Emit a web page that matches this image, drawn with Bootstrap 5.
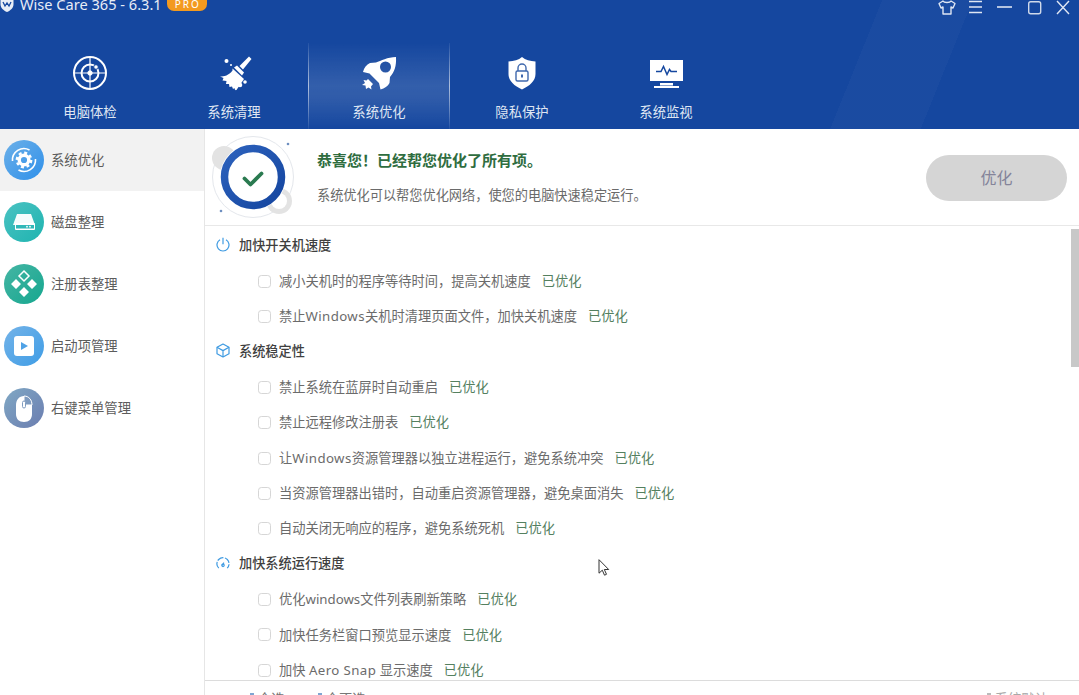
<!DOCTYPE html>
<html lang="zh-CN">
<head>
  <meta charset="UTF-8">
  <title>Wise Care 365</title>
  <link href="https://cdn.jsdelivr.net/npm/bootstrap@5.3.0/dist/css/bootstrap.min.css" rel="stylesheet">
  <style>
    html, body { height: 100%; overflow: hidden; }
    body { font-family: "Noto Sans CJK SC", "Noto Sans", sans-serif; font-size: 13.33px; color: #666; background: #fff; }
    .app-shell { height: 695px; position: relative; overflow: hidden; }
    .app-head { height: 129px; flex: none; background: #15479f linear-gradient(112deg, transparent 78%, rgba(255,255,255,.022) 78%, rgba(255,255,255,.022) 86%, transparent 86%); color: #fff; }
    .title-row { height: 24px; margin-top: -8px; padding-left: 0; }
    .app-name { font-family: "Noto Sans", sans-serif; font-size: 14.6px; color: #e8edf6; margin-left: 6px; line-height: 24px; }
    .pro-tag { background: #f39a1f; color: #fff; font-family: "Noto Sans", sans-serif; font-size: 10px; letter-spacing: 2px; line-height: 14px; height: 14px; padding: 0 6px 0 8px; border-radius: 0 0 7px 7px; margin: 0 0 5px 5px; align-self: flex-end; }
    .win-btns { padding-right: 8px; }
    .win-btns svg { display: block; }
    .win-gap { margin-right: 9px; }
    .tab-strip { margin-top: 27px; padding-left: 18px; height: 86px; flex-wrap: nowrap; }
    .tab-link { width: 144px; height: 86px; padding: 10px 0 0; color: #dfe6f3; text-align: center; line-height: 1; }
    .tab-link:hover, .tab-link:focus { color: #dfe6f3; }
    .tab-link svg { display: block; margin: 0 auto; }
    .tab-link span { display: block; margin-top: 12px; }
    .tab-link.tab-on { background: linear-gradient(180deg, rgba(255,255,255,0) 0%, rgba(255,255,255,.13) 50%, rgba(255,255,255,.11) 65%, rgba(255,255,255,0) 100%); border-style: solid; border-width: 0 1px; border-image: linear-gradient(180deg, rgba(255,255,255,.05), rgba(255,255,255,.6) 50%, rgba(255,255,255,.05)) 1; width: 142px; margin-left: 2px; color: #dfe6f3; }
    .side-col { width: 205px; flex: none; border-right: 1px solid #e6e6e6; }
    .side-item { height: 62px; border: 0; padding: 0 0 0 4px; gap: 7px; color: #5c5c5c; background: transparent; }
    .side-item.side-on { background: #f2f2f2; color: #5c5c5c; }
    .hero { height: 97px; flex: none; border-bottom: 1px solid #e8e8e8; padding: 0 12px 0 3px; }
    .hero-title { color: #2f6d3f; font-size: 15px; font-weight: 700; line-height: 20px; }
    .hero-sub { margin-top: 15px; line-height: 20px; font-size: 13.2px; color: #6a6a6a; }
    .hero-text { margin-left: 19px; margin-top: 1px; }
    .opt-btn { width: 141px; height: 46px; padding: 0 0 2px; background: #d5d5d5; border: 0; color: #84849a; font-size: 16px; margin-top: 1px; }
    .opt-btn:disabled { background: #d5d5d5; color: #84849a; opacity: 1; }
    .list-wrap { min-height: 0; overflow: hidden; }
    .opt-list { padding-top: 2px; }
    .sec-row { height: 35.4px; padding: 0 0 2px 11px; gap: 9px; color: #3f3f3f; font-size: 13.2px; font-weight: 500; }
    .opt-row { height: 35.4px; padding: 1px 0 0 53px; gap: 8px; color: #6b6b6b; font-family: "Noto Sans", "Noto Sans CJK SC", sans-serif; font-size: 13.26px; }
    .opt-row input { width: 13px; height: 13px; margin: -1px 0 0; border: 1px solid #d6d6d6; border-radius: 1px; background-color: #fff; flex: none; }
    .opt-row input:disabled { opacity: 1; }
    .latin-wide { letter-spacing: .4px; }
    .done-tag { color: #54805f; margin-left: 3px; }
    .scroll-track { width: 8px; flex: none; padding-top: 3px; }
    .scroll-thumb { height: 138px; background: #c8c8c8; }
    .foot-bar { height: 15px; flex: none; border-top: 1px solid #dcdcdc; padding: 10px 31px 0 45px; overflow: hidden; color: #777; line-height: 16px; align-items: flex-start; }
    .foot-link { display: flex; gap: 4px; align-items: flex-start; color: #777; }
    .foot-wide { margin-left: 33px; }
    .foot-dot { display: block; width: 4px; height: 2px; margin-top: 2px; background: #7fa5d2; }
    .foot-link.foot-right { color: #aaa; }
    .foot-link.foot-right .foot-dot { background: #bbb; }
    .arrow-cursor { position: absolute; left: 598px; top: 559px; }
  </style>
</head>
<body>
<div class="app-shell d-flex flex-column">

  <header class="app-head">
    <div class="title-row d-flex align-items-center">
      <svg width="14" height="16" viewBox="0 0 14 16"><path d="M7 0l6.500 2v6c0 4-3 6.500-6.500 8C3.500 14.500.5 12 .5 8V2z" fill="#e8edf6"/><path d="M3 6l2 4 2-3 2 3 2-4" fill="none" stroke="#15479f" stroke-width="1.300"/></svg>
      <span class="app-name">Wise Care 365 - 6.3.1</span>
      <span class="pro-tag">PRO</span>
      <div class="win-btns d-flex ms-auto">
        <svg width="22" height="24" viewBox="0 0 22 24" class="win-gap"><path d="M7 9l-4 2.500 2 4.500 2-1v7h8v-7l2 1 2-4.500L15 9c-1 2-7 2-8 0z" fill="none" stroke="#dfe6f3" stroke-width="1.400" stroke-linejoin="round"/></svg>
        <svg width="18" height="24" viewBox="0 0 18 24" class="win-gap"><path d="M2 9.500h13M2 15h13M2 20.500h13" stroke="#dfe6f3" stroke-width="1.400"/></svg>
        <svg width="22" height="24" viewBox="0 0 22 24" class="win-gap"><path d="M3 15h15" stroke="#e8edf6" stroke-width="1.500"/></svg>
        <svg width="22" height="24" viewBox="0 0 22 24" class="me-2"><rect x="3.700" y="9.700" width="12" height="12" rx="2" fill="none" stroke="#cfd9ea" stroke-width="1.400"/></svg>
        <svg width="16" height="24" viewBox="0 0 16 24"><path d="M2 9l12 13M14 9L2 22" stroke="#dfe6f3" stroke-width="1.400"/></svg>
      </div>
    </div>

    <ul class="nav tab-strip">
      <li class="nav-item"><a class="nav-link tab-link" href="#">
        <svg width="40" height="40" viewBox="0 0 40 40" fill="none" stroke="#fff"><circle cx="20" cy="20" r="16" stroke-width="2"/><circle cx="20" cy="20" r="8.500" stroke-width="2"/><path d="M20 4v32M4 20h32" stroke-width="1.200"/><circle cx="20" cy="20" r="2.200" fill="#fff"/><circle cx="26" cy="14" r="2.300" fill="#fff" stroke="#15479f"/></svg>
        <span>电脑体检</span></a></li>
      <li class="nav-item"><a class="nav-link tab-link" href="#">
        <svg width="40" height="40" viewBox="0 0 40 40" fill="#fff"><path d="M35 3.500l2.500 2.500-8.500 10.500-3.500-3.500z"/><path d="M20 14.500l3-2 7 7-2 3z"/><path d="M18.500 15.500L30 26c-2 3-4 6-7.500 11-1 .5-2-.5-2-2l-1.500 1-1-2.500-2.500.5-.5-3-3 0 .5-3-4-.5 1-2.500-3.500-1.500c4 0 9-1 12.500-6z"/><circle cx="12.500" cy="8" r="2"/><circle cx="31" cy="29" r="1.800"/><circle cx="26" cy="32" r="2.300"/><circle cx="17" cy="12" r="1"/></svg>
        <span>系统清理</span></a></li>
      <li class="nav-item"><a class="nav-link tab-link tab-on" href="#">
        <svg width="40" height="40" viewBox="0 0 40 40"><path fill="#fff" fill-rule="evenodd" d="M37 4c.5 9-1.500 15-6 20l-.5 6c-1.500 3-5 5.500-9 6.500l-1.500-6.500-9.500-9.500-6.500-1.500c1-4 3.500-7.500 7-9l6-.5C22 8 28.500 4 37 4zM26.500 8.500a5.500 5.500 0 1 0 0 11 5.500 5.500 0 0 0 0-11z"/><path fill="#fff" d="M9 26l5 5-2 2.500.5 3-3-2-2.500 1.500-.5-3.500-3.500-.5L6 30l-1.500-3 3 .5z"/></svg>
        <span>系统优化</span></a></li>
      <li class="nav-item"><a class="nav-link tab-link" href="#">
        <svg width="40" height="40" viewBox="0 0 40 40"><path fill="#fff" d="M20 4c3.500 3 8 4 13.500 4.500V21c0 7-6 12-13.500 15.500C12.500 33 6.500 28 6.500 21V8.500C12 8 16.500 7 20 4z"/><rect x="14" y="18" width="12" height="10" rx="1.500" fill="none" stroke="#3f68ad" stroke-width="1.400"/><path d="M16 18v-3a4 4 0 0 1 8 0v3" fill="none" stroke="#3f68ad" stroke-width="1.400"/><path d="M20 21.500v3" stroke="#3f68ad" stroke-width="2"/></svg>
        <span>隐私保护</span></a></li>
      <li class="nav-item"><a class="nav-link tab-link" href="#">
        <svg width="40" height="40" viewBox="0 0 40 40"><rect x="4" y="7" width="33" height="21" fill="#fff"/><path d="M14 30h13v2.500H14z" fill="#fff"/><path d="M8 33h25v2H8z" fill="#fff"/><path d="M10 18.500h5l2.500-5 3.500 8 2.500-5 1.500 2h6" fill="none" stroke="#15479f" stroke-width="1.500"/></svg>
        <span>系统监视</span></a></li>
    </ul>
  </header>

  <div class="d-flex flex-grow-1" style="min-height:0">
    <aside class="side-col">
      <div class="list-group list-group-flush">
        <a href="#" class="list-group-item side-item side-on d-flex align-items-center">
          <svg width="40" height="40" viewBox="0 0 40 40"><defs><linearGradient id="g1" x1="0" y1="0" x2="1" y2="1"><stop offset="0" stop-color="#6cb0e8"/><stop offset="1" stop-color="#2f90ea"/></linearGradient></defs><circle cx="20" cy="20" r="20" fill="url(#g1)"/><path d="M8.500 21a11.500 11.500 0 0 1 17-11M31.500 19a11.500 11.500 0 0 1-17 11" fill="none" stroke="#fff" stroke-width="1.600"/><circle cx="20" cy="20" r="4.800" fill="none" stroke="#fff" stroke-width="3.400"/><circle cx="20" cy="20" r="7.200" fill="none" stroke="#fff" stroke-width="2.400" stroke-dasharray="3 2.650"/></svg>
          <span>系统优化</span></a>
        <a href="#" class="list-group-item side-item d-flex align-items-center">
          <svg width="40" height="40" viewBox="0 0 40 40"><defs><linearGradient id="g2" x1="0" y1="0" x2="1" y2="1"><stop offset="0" stop-color="#4ac2c2"/><stop offset="1" stop-color="#1fb4b0"/></linearGradient></defs><circle cx="20" cy="20" r="20" fill="url(#g2)"/><path d="M13 12h14l4 11H9z" fill="#fff" opacity=".95"/><rect x="11" y="21" width="20" height="7" rx="1" fill="#fff"/><rect x="12" y="23" width="18" height="3.500" fill="#2fb8b8"/><circle cx="23" cy="24.700" r=".9" fill="#fff"/><circle cx="26" cy="24.700" r=".9" fill="#fff"/></svg>
          <span>磁盘整理</span></a>
        <a href="#" class="list-group-item side-item d-flex align-items-center">
          <svg width="40" height="40" viewBox="0 0 40 40"><defs><linearGradient id="g3" x1="0" y1="0" x2="1" y2="1"><stop offset="0" stop-color="#45b5a4"/><stop offset="1" stop-color="#16a78f"/></linearGradient></defs><circle cx="20" cy="20" r="20" fill="url(#g3)"/><path d="M20 7l5 5-5 5-5-5z" fill="none" stroke="#fff" stroke-width="1.500"/><path d="M12 15l5 5-5 5-5-5zM28 15l5 5-5 5-5-5zM20 23l5 5-5 5-5-5z" fill="#fff"/></svg>
          <span>注册表整理</span></a>
        <a href="#" class="list-group-item side-item d-flex align-items-center">
          <svg width="40" height="40" viewBox="0 0 40 40"><defs><linearGradient id="g4" x1="0" y1="0" x2="1" y2="1"><stop offset="0" stop-color="#74b3e8"/><stop offset="1" stop-color="#3f9de6"/></linearGradient></defs><circle cx="20" cy="20" r="20" fill="url(#g4)"/><rect x="10" y="10" width="20" height="20" rx="3" fill="#fff"/><path d="M17 16l7 4-7 4z" fill="#4fa2e6"/></svg>
          <span>启动项管理</span></a>
        <a href="#" class="list-group-item side-item d-flex align-items-center">
          <svg width="40" height="40" viewBox="0 0 40 40"><defs><linearGradient id="g5" x1="0" y1="0" x2="1" y2="1"><stop offset="0" stop-color="#80a8c4"/><stop offset="1" stop-color="#6b7db0"/></linearGradient></defs><circle cx="20" cy="20" r="20" fill="url(#g5)"/><path d="M12 17c0-5 3-9 8-9s8 4 8 9v9c0 5-3 8-8 8s-8-3-8-8z" fill="#fff"/><path d="M20 8c5 0 8 4 8 9h-8z" fill="#7f9bbf" stroke="#fff"/><rect x="18.500" y="13" width="3" height="7" rx="1.500" fill="#fff" stroke="#7f9bbf"/></svg>
          <span>右键菜单管理</span></a>
      </div>
    </aside>

    <main class="d-flex flex-column flex-grow-1" style="min-width:0">
      <section class="hero d-flex align-items-center">
        <svg width="90" height="90" viewBox="0 0 90 90" class="flex-shrink-0">
          <defs><linearGradient id="g6" x1="0" y1="0" x2="1" y2="1"><stop offset="0" stop-color="#2d62bd"/><stop offset="1" stop-color="#14459f"/></linearGradient></defs>
          <circle cx="45" cy="45" r="40.500" fill="none" stroke="#e4e7ec" stroke-width="1"/>
          <circle cx="16" cy="26" r="12" fill="#e3e3e3"/>
          <circle cx="71" cy="69" r="13" fill="#e3e3e3"/>
          <circle cx="71" cy="69" r="8" fill="#fff"/>
          <circle cx="45" cy="45" r="33" fill="#fff"/>
          <circle cx="45" cy="45" r="28.500" fill="#fff" stroke="url(#g6)" stroke-width="7.500"/>
          <path d="M36.500 46.500l6 6 11-11" fill="none" stroke="#2a7a50" stroke-width="3.800" stroke-linecap="round" stroke-linejoin="round"/>
          <circle cx="80" cy="12" r="1.300" fill="#6e8fc0"/>
          <circle cx="13" cy="79" r="1.300" fill="#6e8fc0"/>
        </svg>
        <div class="hero-text">
          <div class="hero-title">恭喜您！已经帮您优化了所有项。</div>
          <div class="hero-sub">系统优化可以帮您优化网络，使您的电脑快速稳定运行。</div>
        </div>
        <button class="btn opt-btn rounded-pill ms-auto" disabled>优化</button>
      </section>

      <div class="list-wrap d-flex flex-grow-1">
        <div class="opt-list flex-grow-1">
          <div class="sec-row d-flex align-items-center">
            <svg width="14" height="15" viewBox="0 0 14 15" fill="none" stroke="#3f9be2" stroke-width="1.200"><path d="M7 .8v6.400"/><path d="M4 2.800a6 6 0 1 0 6 0"/></svg>
            <span>加快开关机速度</span></div>
          <div class="opt-row d-flex align-items-center"><input class="form-check-input" type="checkbox" disabled><span>减小关机时的程序等待时间，提高关机速度</span><span class="done-tag">已优化</span></div>
          <div class="opt-row d-flex align-items-center"><input class="form-check-input" type="checkbox" disabled><span>禁止<span class="latin-wide">Windows</span>关机时清理页面文件，加快关机速度</span><span class="done-tag">已优化</span></div>
          <div class="sec-row d-flex align-items-center">
            <svg width="14" height="15" viewBox="0 0 14 15" fill="none" stroke="#3f9be2" stroke-width="1.200" stroke-linejoin="round"><path d="M7 1l6 3.300v6.400L7 14l-6-3.300V4.300z"/><path d="M1 4.300L7 7.600l6-3.300M7 7.600V14"/></svg>
            <span>系统稳定性</span></div>
          <div class="opt-row d-flex align-items-center"><input class="form-check-input" type="checkbox" disabled><span>禁止系统在蓝屏时自动重启</span><span class="done-tag">已优化</span></div>
          <div class="opt-row d-flex align-items-center"><input class="form-check-input" type="checkbox" disabled><span>禁止远程修改注册表</span><span class="done-tag">已优化</span></div>
          <div class="opt-row d-flex align-items-center"><input class="form-check-input" type="checkbox" disabled><span>让<span class="latin-wide">Windows</span>资源管理器以独立进程运行，避免系统冲突</span><span class="done-tag">已优化</span></div>
          <div class="opt-row d-flex align-items-center"><input class="form-check-input" type="checkbox" disabled><span>当资源管理器出错时，自动重启资源管理器，避免桌面消失</span><span class="done-tag">已优化</span></div>
          <div class="opt-row d-flex align-items-center"><input class="form-check-input" type="checkbox" disabled><span>自动关闭无响应的程序，避免系统死机</span><span class="done-tag">已优化</span></div>
          <div class="sec-row d-flex align-items-center">
            <svg width="14" height="15" viewBox="0 0 15 15" fill="none" stroke="#3f9be2" stroke-width="1.300"><path d="M3 12.500a6.500 6.500 0 1 1 9 0" stroke-dasharray="7 1.500"/><path d="M6.500 9.500l2-3"/><circle cx="7.500" cy="9.500" r="1.300"/></svg>
            <span>加快系统运行速度</span></div>
          <div class="opt-row d-flex align-items-center"><input class="form-check-input" type="checkbox" disabled><span>优化windows文件列表刷新策略</span><span class="done-tag">已优化</span></div>
          <div class="opt-row d-flex align-items-center"><input class="form-check-input" type="checkbox" disabled><span>加快任务栏窗口预览显示速度</span><span class="done-tag">已优化</span></div>
          <div class="opt-row d-flex align-items-center"><input class="form-check-input" type="checkbox" disabled><span>加快 <span class="latin-wide">Aero Snap</span> 显示速度</span><span class="done-tag">已优化</span></div>
        </div>
        <div class="scroll-track"><div class="scroll-thumb"></div></div>
      </div>

      <footer class="foot-bar d-flex">
        <a class="foot-link text-decoration-none" href="#"><i class="foot-dot"></i>全选</a>
        <a class="foot-link foot-wide text-decoration-none" href="#"><i class="foot-dot"></i>全不选</a>
        <a class="foot-link foot-right text-decoration-none ms-auto" href="#"><i class="foot-dot"></i>系统默认</a>
      </footer>
    </main>
  </div>

  <svg class="arrow-cursor" width="12" height="18" viewBox="0 0 12 18"><path d="M1 .7v13.500l3.300-3 2.200 5 2-.9-2.200-4.800h4.400z" fill="#fff" stroke="#333" stroke-width="1"/></svg>
</div>
<script src="https://cdn.jsdelivr.net/npm/bootstrap@5.3.0/dist/js/bootstrap.bundle.min.js"></script>
</body>
</html>
